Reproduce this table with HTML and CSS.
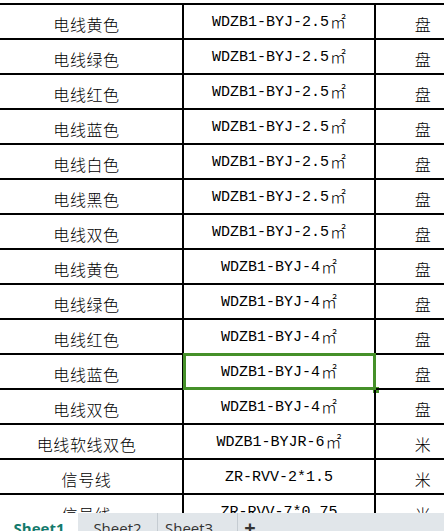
FILE: index.html
```html
<!DOCTYPE html>
<html lang="zh">
<head>
<meta charset="utf-8">
<link rel="stylesheet" href="styles.css">
</head>
<body>
<div class="sheet">
  <div class="grid">
    <div class="c name">电线黄色</div><div class="c spec">WDZB1-BYJ-2.5<span class="m2">㎡</span></div><div class="c unit">盘</div>
    <div class="c name">电线绿色</div><div class="c spec">WDZB1-BYJ-2.5<span class="m2">㎡</span></div><div class="c unit">盘</div>
    <div class="c name">电线红色</div><div class="c spec">WDZB1-BYJ-2.5<span class="m2">㎡</span></div><div class="c unit">盘</div>
    <div class="c name">电线蓝色</div><div class="c spec">WDZB1-BYJ-2.5<span class="m2">㎡</span></div><div class="c unit">盘</div>
    <div class="c name">电线白色</div><div class="c spec">WDZB1-BYJ-2.5<span class="m2">㎡</span></div><div class="c unit">盘</div>
    <div class="c name">电线黑色</div><div class="c spec">WDZB1-BYJ-2.5<span class="m2">㎡</span></div><div class="c unit">盘</div>
    <div class="c name">电线双色</div><div class="c spec">WDZB1-BYJ-2.5<span class="m2">㎡</span></div><div class="c unit">盘</div>
    <div class="c name">电线黄色</div><div class="c spec">WDZB1-BYJ-4<span class="m2">㎡</span></div><div class="c unit">盘</div>
    <div class="c name">电线绿色</div><div class="c spec">WDZB1-BYJ-4<span class="m2">㎡</span></div><div class="c unit">盘</div>
    <div class="c name">电线红色</div><div class="c spec">WDZB1-BYJ-4<span class="m2">㎡</span></div><div class="c unit">盘</div>
    <div class="c name">电线蓝色</div><div class="c spec selected">WDZB1-BYJ-4<span class="m2">㎡</span><span class="sel"></span><span class="handle"></span></div><div class="c unit">盘</div>
    <div class="c name">电线双色</div><div class="c spec">WDZB1-BYJ-4<span class="m2">㎡</span></div><div class="c unit">盘</div>
    <div class="c name">电线软线双色</div><div class="c spec">WDZB1-BYJR-6<span class="m2">㎡</span></div><div class="c unit">米</div>
    <div class="c name">信号线</div><div class="c spec">ZR-RVV-2*1.5</div><div class="c unit">米</div>
    <div class="c name">信号线</div><div class="c spec">ZR-RVV-7*0.75</div><div class="c unit">米</div>
  </div>
</div>
<div class="tabs">
  <div class="tab active">Sheet1</div>
  <div class="tab">Sheet2</div>
  <div class="tab third">Sheet3</div>
  <div class="add">+</div>
</div>
</body>
</html>
```

FILE: styles.css
```css
html, body {
  margin: 0;
  padding: 0;
  background: #ffffff;
}
body {
  width: 444px;
  height: 531px;
  overflow: hidden;
}
.sheet {
  height: 513px;
  overflow: hidden;
  background: #ffffff;
}
.grid {
  display: grid;
  grid-template-columns: 193px 192px 96px;
  grid-auto-rows: 35px;
  margin-left: -9px;
  margin-top: 3px;
  border-top: 2px solid #000;
  width: 481px;
}
.c {
  box-sizing: border-box;
  border-right: 2px solid #000;
  border-bottom: 2px solid #000;
  display: flex;
  justify-content: center;
  align-items: center;
  color: #000;
  white-space: nowrap;
  position: relative;
}
.name, .unit {
  font-family: "Noto Sans CJK SC", sans-serif;
  font-size: 16px;
  font-weight: 300;
  letter-spacing: 0.6px;
  line-height: 16px;
  padding-top: 5px;
}
.spec {
  font-family: "Liberation Mono", monospace;
  font-size: 15px;
  line-height: 16px;
  padding-top: 3px;
}
.m2 {
  font-family: "Noto Sans CJK SC", sans-serif;
  font-size: 16px;
  font-weight: 300;
  line-height: 16px;
  position: relative;
  top: -2px;
  margin-left: 1px;
}
.sel {
  position: absolute;
  left: -1px;
  top: -2px;
  width: 193px;
  height: 37px;
  box-sizing: border-box;
  border: 3px solid #459029;
}
.handle {
  position: absolute;
  left: 189px;
  top: 32px;
  width: 6px;
  height: 6px;
  background: #459029;
}
.tabs {
  height: 18px;
  display: flex;
  align-items: flex-start;
  background: #e1e6ea;
  overflow: hidden;
  font-family: "Open Sans", "Noto Sans", sans-serif;
  font-size: 15px;
}
.tab {
  width: 80px;
  box-sizing: border-box;
  border-right: 1px solid #c5ccd2;
  text-align: center;
  line-height: 30px;
  color: #333;
}
.tab.third {
  text-align: left;
  padding-left: 7px;
}
.tab.active {
  background: #ffffff;
  color: #137a6c;
  font-weight: bold;
  border-right: none;
  width: 78px;
}
.add {
  width: 24px;
  text-align: center;
  font-weight: bold;
  font-size: 20px;
  line-height: 30px;
  color: #333;
}
```
